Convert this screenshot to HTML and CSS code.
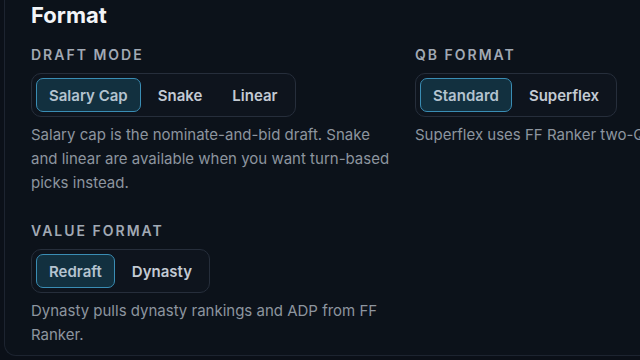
FILE: index.html
```html
<!DOCTYPE html>
<html lang="en">
<head>
    <meta charset="UTF-8">
    <meta name="viewport" content="width=device-width, initial-scale=1.0">
    <title>Format</title>
    <link rel="stylesheet" href="styles.css">
</head>
<body>
    <section class="card">
        <h2 class="card-title">Format</h2>
        <div class="fields">
            <div class="field">
                <div class="field-label">Draft Mode</div>
                <div class="seg">
                    <button class="seg-btn active">Salary Cap</button>
                    <button class="seg-btn">Snake</button>
                    <button class="seg-btn">Linear</button>
                </div>
                <p class="field-help">Salary cap is the nominate-and-bid draft. Snake and linear are available when you want turn-based picks instead.</p>
            </div>
            <div class="field">
                <div class="field-label">QB Format</div>
                <div class="seg">
                    <button class="seg-btn active">Standard</button>
                    <button class="seg-btn">Superflex</button>
                </div>
                <p class="field-help">Superflex uses FF Ranker two-QB rankings.</p>
            </div>
            <div class="field">
                <div class="field-label">Value Format</div>
                <div class="seg">
                    <button class="seg-btn active">Redraft</button>
                    <button class="seg-btn">Dynasty</button>
                </div>
                <p class="field-help">Dynasty pulls dynasty rankings and ADP from FF Ranker.</p>
            </div>
        </div>
    </section>
</body>
</html>
```

FILE: styles.css
```css
html, body {
    margin: 0;
    height: 100%;
    overflow: hidden;
}

body {
    background-color: #0b1018;
    font-family: Inter, "Noto Sans", sans-serif;
    color: #c2c9d2;
}

.card {
    margin-left: 4px;
    width: 900px;
    height: 356px;
    box-sizing: border-box;
    padding: 0 0 0 26px;
    background: #0c121a;
    border-left: 1px solid #1d2430;
    border-bottom: 1px solid #1d2430;
    border-bottom-left-radius: 12px;
}

.card-title {
    margin: 0;
    font-size: 22px;
    line-height: 30px;
    font-weight: 700;
    color: #f3f5f8;
}

.fields {
    display: grid;
    grid-template-columns: 360px 360px;
    column-gap: 24px;
    row-gap: 27px;
    margin-top: 16px;
}

.field-label {
    font-size: 14px;
    line-height: 18px;
    font-weight: 600;
    letter-spacing: 2px;
    text-transform: uppercase;
    color: #a1a9b4;
    margin-bottom: 9px;
}

.seg {
    display: inline-flex;
    gap: 4px;
    padding: 4px;
    border: 1px solid #262e3b;
    border-radius: 10px;
    background: #0e141d;
}

.seg-btn {
    height: 34px;
    padding: 0 12px;
    font-family: inherit;
    font-size: 15px;
    font-weight: 600;
    color: #c3cad3;
    background: transparent;
    border: 1px solid transparent;
    border-radius: 7px;
    cursor: pointer;
}

.seg-btn.active {
    background: #12303f;
    border-color: #3a8db4;
    color: #b4c3cf;
}

.field-help {
    margin: 6px 0 0;
    font-size: 15px;
    line-height: 24px;
    color: #8d959f;
}
```
